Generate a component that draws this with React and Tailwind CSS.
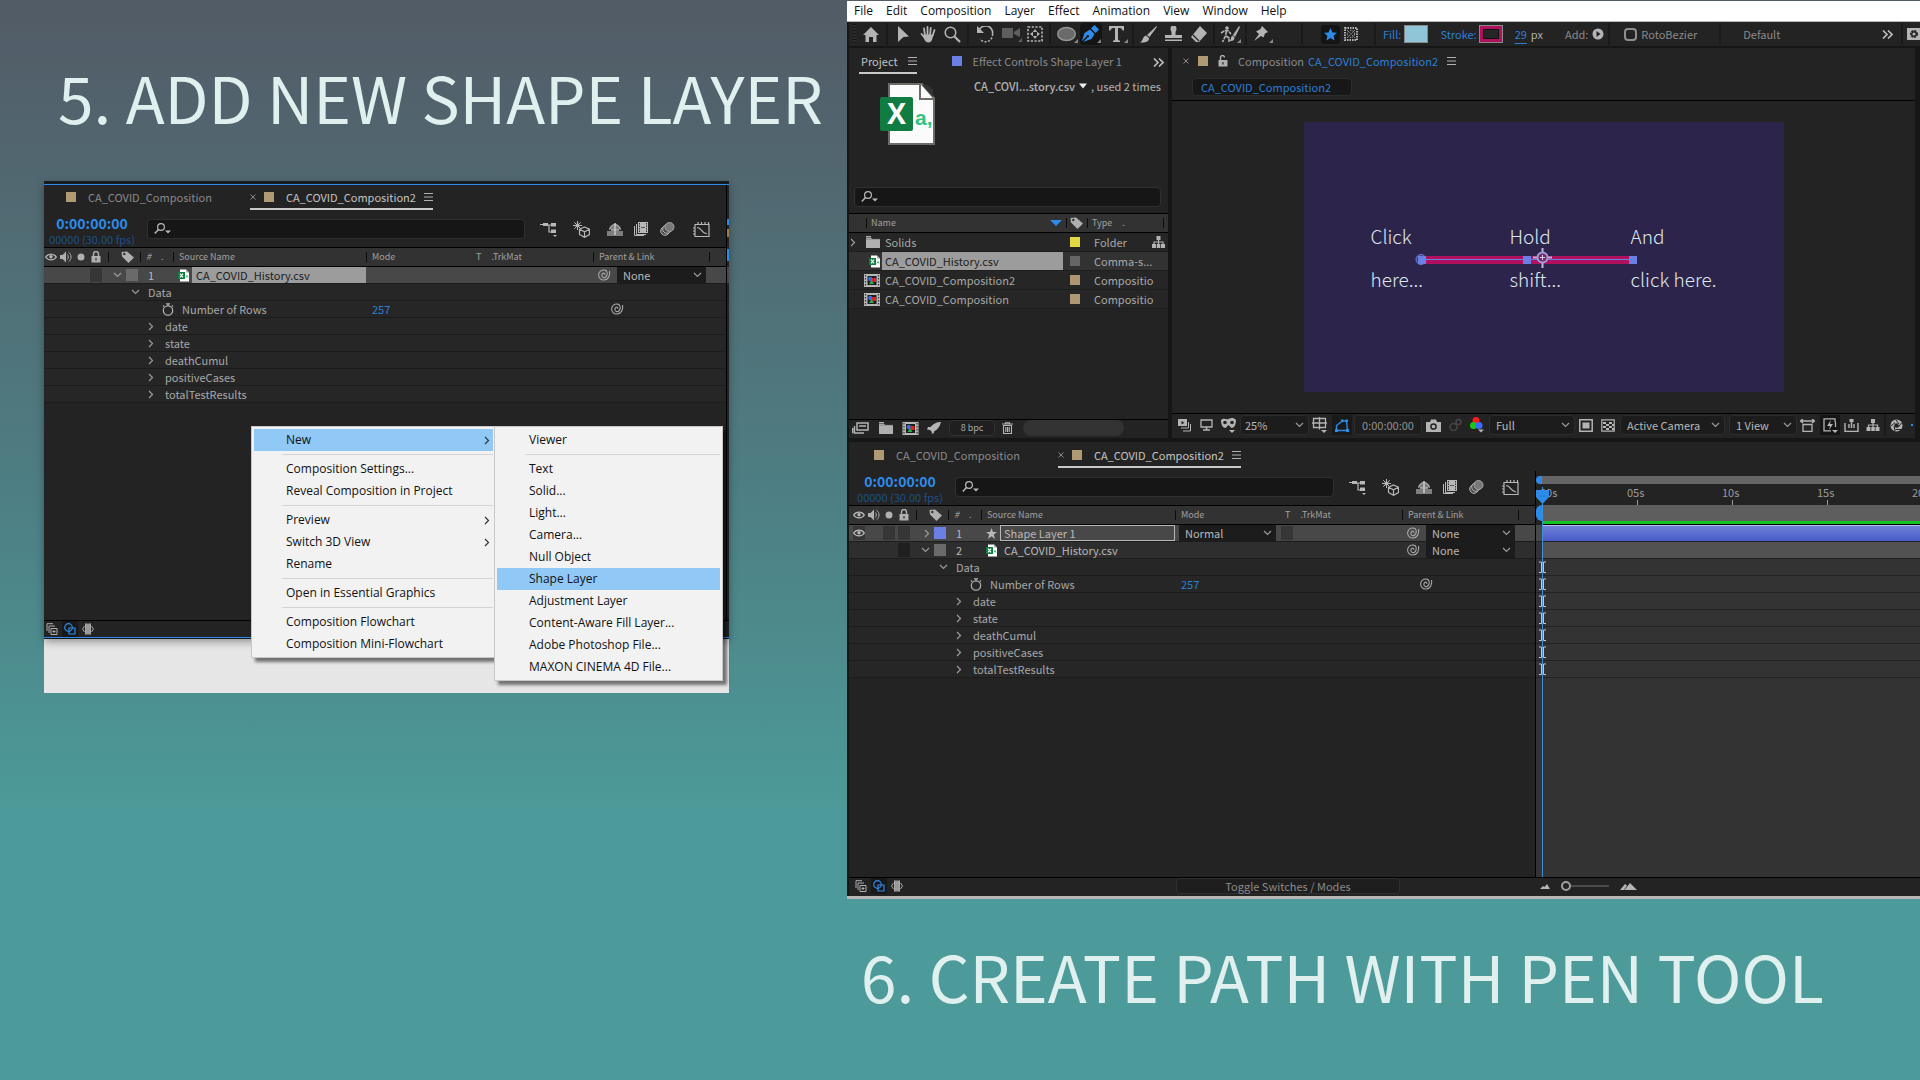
import React from "react";

const UI = "font-['Noto_Sans_CJK_SC','Noto_Sans',sans-serif]";
const MENU = "font-['Open_Sans','Noto_Sans',sans-serif]";
const HEAD = "font-['Noto_Sans_CJK_SC','Noto_Sans',sans-serif] whitespace-nowrap text-[#dff0ef]";

/* ---------- icons ---------- */
function Svg({ w = 16, h = w, box, className = "", children }) {
  return (
    <svg
      width={w}
      height={h}
      viewBox={box || `0 0 ${w} ${h}`}
      fill="none"
      stroke="none"
      aria-hidden="true"
      className={`shrink-0 ${className}`}
    >
      {children}
    </svg>
  );
}

const Burger = () => (
  <Svg w={9} h={8}>
    <path d="M0 .5h9M0 4h9M0 7.500h9" stroke="#b0b0b0" />
  </Svg>
);
const Close = () => (
  <Svg w={6}>
    <path d="M.5.5l5 5M5.500.5l-5 5" stroke="#8a8a8a" />
  </Svg>
);
const Down = ({ color = "#9a9a9a" }) => (
  <Svg w={9} h={6}>
    <path d="M1 1l3.500 3.500L8 1" stroke={color} strokeWidth="1.200" />
  </Svg>
);
const Right = ({ color = "#9a9a9a" }) => (
  <Svg w={6} h={9}>
    <path d="M1 1l3.500 3.500L1 8" stroke={color} strokeWidth="1.200" />
  </Svg>
);
const More = () => (
  <Svg w={11} h={9}>
    <path d="M1 .5l4 4-4 4M6 .5l4 4-4 4" stroke="#c0c0c0" strokeWidth="1.600" />
  </Svg>
);
const SearchGlyph = () => (
  <Svg w={17} h={12}>
    <circle cx="7" cy="4" r="3.400" stroke="#b8b8b8" strokeWidth="1.200" />
    <path d="M4.500 6.500L.8 10.500" stroke="#b8b8b8" strokeWidth="1.500" />
    <path d="M11 7.500h6l-3 3z" fill="#b8b8b8" />
  </Svg>
);
const Eye = () => (
  <Svg w={12} h={8}>
    <path d="M.7 4C3 .2 9 .2 11.300 4 9 7.800 3 7.800.7 4z" stroke="#b8b8b8" strokeWidth="1.300" />
    <circle cx="6" cy="3.800" r="1.700" fill="#b8b8b8" />
  </Svg>
);
const Speaker = () => (
  <Svg w={12} h={12}>
    <path d="M0 4h2.500L6 .5v11L2.500 8H0z" fill="#b0b0b0" />
    <path d="M7.500 3.500c1 1.500 1 3.500 0 5M8.500 1.200c3.400 2.500 3.400 7 0 9.600" stroke="#b0b0b0" />
  </Svg>
);
const Dot = () => (
  <Svg w={12} h={8}>
    <circle cx="6" cy="4" r="3.500" fill="#b0b0b0" />
  </Svg>
);
const Lock = ({ open }) => (
  <Svg w={12} h={12}>
    <path d={open ? "M3.500 5V2.500a2 2 0 0 1 4 0" : "M3.500 6V3a2.500 2.500 0 0 1 5 0v3"} stroke="#b0b0b0" strokeWidth="1.400" />
    <path d="M1.500 5h9v6.500h-9z" fill="#b0b0b0" />
    <path d="M6 7v2.500" stroke="#333" strokeWidth="1.300" />
  </Svg>
);
const Tag = () => (
  <Svg w={13} h={12}>
    <path d="M.5 1L1 5.500 7.500 12 13 6.500 6 .5z" fill="#b0b0b0" />
    <circle cx="3.300" cy="3" r="1.200" fill="#333" />
  </Svg>
);
const Swirl = () => (
  <Svg w={13} h={12}>
    <path
      d="M11.500 2c.8 5-1.500 9-5.500 9a5 5 0 1 1 .5-9.900C9 1.300 9.600 4 9 6s-2.200 3-3.800 2.500C3.500 8 3.400 5.200 5 4.300c1-.5 2 .2 1.700 1.500"
      stroke="#a8a8a8"
      strokeWidth="1.100"
    />
  </Svg>
);
const Stopwatch = () => (
  <Svg w={12} h={13}>
    <circle cx="6" cy="7.500" r="4.700" stroke="#b0b0b0" strokeWidth="1.200" />
    <path d="M4 .8h4M6 .8v2M10 2.500l1 1M2 2.500l-1 1" stroke="#b0b0b0" strokeWidth="1.300" />
  </Svg>
);
const CsvIcon = () => (
  <Svg w={11} h={13}>
    <path d="M2 .5h6l3 3v9H2z" fill="#fff" />
    <path d="M8 .5v3h3" fill="#aaa" />
    <path d="M0 3h7v7H0z" fill="#107c41" />
    <path d="M2 4.700l3 3.600M5 4.700L2 8.300" stroke="#fff" strokeWidth="1.100" />
    <path d="M8 8.500l1-2 1 2" stroke="#33c481" />
  </Svg>
);
const CompIcon = ({ w = 16 }) => (
  <Svg w={w} h={13} box="0 0 16 13">
    <path d="M0 0h16v13H0z" fill="#b8b8b8" />
    <path d="M1.500 1v12M14.500 1v12" stroke="#333" strokeWidth="1.200" strokeDasharray="1.500 1.500" />
    <path d="M3.500 2h9v9h-9z" fill="#1c1c1c" />
    <circle cx="6.300" cy="5" r="2.200" fill="#2f6fe0" />
    <path d="M8 4h4v4H8z" fill="#e02020" />
    <path d="M5 10l2.500-4L10 10z" fill="#2cae4e" />
  </Svg>
);
const FolderIcon = () => (
  <Svg w={14} h={12}>
    <path d="M0 1.500h5l1 1.500h8v9H0z" fill="#b0b0b0" />
    <path d="M0 .5h5M0 3.500h14" stroke="#b0b0b0" />
    <path d="M0 3.200h14" stroke="#777" strokeWidth=".6" />
  </Svg>
);
const Hierarchy = ({ w = 13 }) => (
  <Svg w={w} h={12} box="0 0 13 12">
    <path d="M4.500 0h4v4h-4zM0 8h4v4H0zM4.800 8h3.500v4H4.800zM9 8h4v4H9z" fill="#b4b4b4" />
    <path d="M6.500 4v4M2 8V6h9v2" stroke="#b4b4b4" strokeWidth="1.200" />
  </Svg>
);

const FlowIcon = () => (
  <Svg w={17} h={16}>
    <path d="M0 3.500h6M6 4h5M9 4v7h3" stroke="#b8b8b8" strokeWidth="1.200" />
    <path d="M3 2h5v3H3zM11 2h5v3.500h-5zM11 8.500h5V12h-5z" fill="#b8b8b8" />
    <path d="M13 14h4l-2 2z" fill="#b8b8b8" />
  </Svg>
);
const DraftCube = () => (
  <Svg w={17} h={17}>
    <path d="M4.500 0v9M0 4.500h9M1.300 1.300l6.400 6.400M7.700 1.300L1.300 7.700" stroke="#b8b8b8" />
    <circle cx="4.500" cy="4.500" r="2" fill="#b8b8b8" />
    <path d="M11.500 6l5 2.300v5.200l-5 2.800-5-2.800V8.300zM6.500 8.300l5 2.500 5-2.500M11.500 10.800v5.500" stroke="#b8b8b8" strokeWidth="1.200" />
  </Svg>
);
const ShyIcon = () => (
  <Svg w={16} h={13}>
    <path d="M0 8h16v5H0z" fill="#7e7e7e" />
    <path d="M2 6.500C3 3 5 1.500 8 1.500S13 3 14 6.500z" fill="#7e7e7e" />
    <path d="M2.500 6.500C3.500 3 5.500 1.500 8 1.500S12.500 3 13.500 6.500" stroke="#c4c4c4" />
    <path d="M8 0v12" stroke="#c4c4c4" strokeWidth="1.600" />
    <path d="M4 7h8" stroke="#c4c4c4" strokeWidth="1.400" />
  </Svg>
);
const BlendIcon = () => (
  <Svg w={14} h={14}>
    <path d="M4 0h10v11H4z" fill="#b8b8b8" />
    <path d="M5.500 1v10M12.500 1v10" stroke="#333" strokeDasharray="1.500 1" />
    <path d="M7 5.500h4" stroke="#555" />
    <path d="M2.500 2v10.500H12M.5 4v9.500H10" stroke="#b8b8b8" />
  </Svg>
);
const MotionBlur = () => (
  <Svg w={15} h={14}>
    <circle cx="5" cy="9" r="4.300" stroke="#b8b8b8" fill="#4a4a4a" />
    <circle cx="7" cy="7" r="4.300" stroke="#b8b8b8" fill="#4a4a4a" />
    <circle cx="9.500" cy="5" r="4.500" stroke="#a8a8a8" fill="#787878" />
  </Svg>
);
const GraphIcon = () => (
  <Svg w={17} h={15}>
    <path d="M2 2.500h14v12H2zM5 0v2.500M8.500 0v2.500M12 0v2.500M15.500 0v2.500M0 6h2M0 9h2M0 12h2" stroke="#b8b8b8" strokeWidth="1.200" />
    <path d="M4 5.500c5 0 4 6 10 6.500" stroke="#b8b8b8" strokeWidth="1.200" />
  </Svg>
);

/* ---------- small parts ---------- */
function IconButton({ label, className = "", children }) {
  return (
    <button type="button" aria-label={label} className={`flex shrink-0 items-center justify-center ${className}`}>
      {children}
    </button>
  );
}

function SelectBox({ label, value, className = "" }) {
  return (
    <span className={`flex items-center justify-between bg-[#1c1c1c] pr-1 ${className}`}>
      <select aria-label={label} defaultValue={value} className="min-w-0 flex-1 appearance-none bg-transparent text-[#b8b8b8] outline-none">
        <option>{value}</option>
      </select>
      <Down />
    </span>
  );
}

function SearchField({ label, className = "" }) {
  return (
    <label className={`flex h-5 min-w-0 items-center rounded-sm border border-[#303030] bg-[#161616] pl-1.5 ${className}`}>
      <SearchGlyph />
      <input type="text" aria-label={label} className="min-w-0 flex-1 bg-transparent text-[#b8b8b8] outline-none" />
    </label>
  );
}

const ColumnMark = () => <span className="h-2.5 w-px shrink-0 bg-[#0c0c0c]" />;

/* ---------- timeline panel ---------- */
function CompositionTabs({ inset }) {
  return (
    <div className={`flex items-end pb-[3px] text-[11px] leading-4 ${inset ? "h-[29px] pl-[25px]" : "h-7 pl-[22px]"}`}>
      <button type="button" className="flex h-6 items-center gap-3 border-b-2 border-transparent pr-[38px] text-[#8a8a8a]">
        <span className="size-2.5 bg-[#b09a74]" />
        CA_COVID_Composition
      </button>
      <button type="button" className="flex h-6 items-center border-b-2 border-[#c8c8c8] text-[#c4c4c4]">
        <Close />
        <span className="ml-2 mr-3 size-2.5 bg-[#b09a74]" />
        CA_COVID_Composition2
        <span className="ml-2">
          <Burger />
        </span>
      </button>
    </div>
  );
}

function TimeRow({ inset }) {
  return (
    <div className={`flex h-[34px] ${inset ? "pl-[3px]" : ""}`}>
      <div className="mr-[7px] w-24 shrink-0 text-center">
        <div className="text-[14px] font-bold leading-5 text-[#2d8ceb]">0:00:00:00</div>
        <div className="whitespace-nowrap text-[11px] leading-3 text-[#1d5086]">00000 (30.00 fps)</div>
      </div>
      <SearchField label="Search layers" className="mt-1.5 flex-1" />
      <div className="mt-1.5 flex h-5 w-[201px] shrink-0 items-center pl-[15px]">
        <IconButton label="Mini-Flowchart" className="mr-4"><FlowIcon /></IconButton>
        <IconButton label="Draft 3D" className="mr-[17px]"><DraftCube /></IconButton>
        <IconButton label="Hide shy layers" className="mr-[11px]"><ShyIcon /></IconButton>
        <IconButton label="Frame blending" className="mr-3"><BlendIcon /></IconButton>
        <IconButton label="Motion blur" className="mr-[18px]"><MotionBlur /></IconButton>
        <IconButton label="Graph editor"><GraphIcon /></IconButton>
      </div>
    </div>
  );
}

const cell = "h-[17px] border-b border-[#1c1c1c] p-0";
const head = "h-5 border-y border-black bg-[#323232] p-0 text-left font-normal";
const bit = "flex h-3.5 w-3 items-center justify-center";

function LayerRow({ layer }) {
  const on = layer.selected;
  const dark = on ? "bg-[#363636]" : "bg-[#1f1f1f]";
  return (
    <tr className={on ? "bg-[#484848]" : "bg-[#2e2e2e]"}>
      <td className={cell}>
        <div className="flex justify-end gap-[3px] pr-1.5">
          <span className={`${bit} ${layer.visible ? dark : ""}`}>{layer.visible && <Eye />}</span>
          <span className={bit} />
          <span className={`${bit} ${layer.visible ? dark : ""}`} />
          <span className={`${bit} ${dark}`} />
        </div>
      </td>
      <td className={cell}>
        <div className="flex items-center justify-end gap-1 pr-0.5">
          {layer.open ? <Down /> : <Right />}
          <span className={layer.shape ? "size-3 bg-[#6a80e4]" : "size-3 bg-[#6a6a6a]"} />
        </div>
      </td>
      <td className={`${cell} pl-2 text-[#b8b8b8]`}>{layer.number}</td>
      <td className={`${cell} pl-[5px]`}>
        <div className="flex h-4 items-center">
          {layer.shape ? (
            <Svg w={11} h={11}>
              <path d="M5.500 0L7 4h4L7.800 6.600 9 11 5.500 8.300 2 11l1.200-4.400L0 4h4z" fill="#b8b8b8" />
            </Svg>
          ) : (
            <CsvIcon />
          )}
          <span
            className={
              layer.shape
                ? "ml-[3px] h-4 flex-1 border border-[#b8b8b8] px-[3px] leading-[14px] text-[#b8b8b8]"
                : on
                  ? "ml-[3px] h-4 flex-1 bg-[#9c9c9c] px-1 text-[#1c1c1c]"
                  : "ml-[7px] flex-1 text-[#b8b8b8]"
            }
          >
            {layer.name}
          </span>
        </div>
      </td>
      <td className={`${cell} pl-1`}>{layer.mode && <SelectBox label="Mode" value={layer.mode} className="h-4 w-[97px] pl-1.5" />}</td>
      <td className={`${cell} pl-0.5`}>{layer.mode && <span className={`block h-3.5 w-3 ${dark}`} />}</td>
      <td className={cell}>
        <div className="flex items-center gap-1.5 pl-[5px]">
          <Swirl />
          <SelectBox label={`Parent of ${layer.name}`} value="None" className="h-4 w-[89px] pl-1.5" />
        </div>
      </td>
    </tr>
  );
}

const fields = ["date", "state", "deathCumul", "positiveCases", "totalTestResults"];

function LayerTable({ layers, inset }) {
  const row = "bg-[#262626] text-[#a8a8a8]";
  const lead = inset ? "pl-[3px]" : "";
  return (
    <table className="w-full table-fixed border-separate border-spacing-0 text-[11px] leading-4">
      <colgroup>
        <col className={inset ? "w-[67px]" : "w-16"} />
        <col className="w-8" />
        <col className="w-[33px]" />
        <col />
        <col className="w-[104px]" />
        <col className="w-[123px]" />
        <col className="w-[133px]" />
      </colgroup>
      <thead className="text-[9px] text-[#a0a0a0]">
        <tr>
          <th className={head} aria-label="Switches">
            <div className="flex items-center justify-end gap-[3px] pr-1.5"><Eye /><Speaker /><Dot /><Lock /></div>
          </th>
          <th className={head} aria-label="Label">
            <div className="flex items-center justify-between pr-1.5"><ColumnMark /><Tag /></div>
          </th>
          <th className={head}>
            <div className="flex items-center"><ColumnMark /><span className="ml-[5px] mr-2.5 italic">#</span>.</div>
          </th>
          <th className={head}>
            <div className="flex items-center gap-[5px]"><ColumnMark />Source Name</div>
          </th>
          <th className={head}>
            <div className="flex items-center gap-[5px]"><ColumnMark />Mode</div>
          </th>
          <th className={head}>
            <div className="flex items-center gap-2.5 pl-1.5"><span>T</span><span>.TrkMat</span></div>
          </th>
          <th className={head}>
            <div className="flex items-center gap-[5px] pr-4"><ColumnMark /><span className="flex-1">Parent &amp; Link</span><ColumnMark /></div>
          </th>
        </tr>
      </thead>
      <tbody>
        {layers.map((l) => (
          <LayerRow key={l.number} layer={l} />
        ))}
        <tr className={row}>
          <td colSpan={7} className={cell}>
            <div className={`flex ${lead}`}><div className="flex items-center gap-2 pl-[87px]"><Down />Data</div></div>
          </td>
        </tr>
        <tr className={row}>
          <td colSpan={4} className={cell}>
            <div className={`flex ${lead}`}><div className="flex h-4 items-center gap-2 pl-[118px]"><Stopwatch />Number of Rows</div></div>
          </td>
          <td colSpan={2} className={`${cell} pl-1.5 text-[#2d7fd6]`}>257</td>
          <td className={`${cell} pl-[18px]`}><Swirl /></td>
        </tr>
        {fields.map((f) => (
          <tr key={f} className={row}>
            <td colSpan={7} className={cell}>
              <div className={`flex ${lead}`}><div className="flex items-center gap-[11px] pl-[104px]"><Right />{f}</div></div>
            </td>
          </tr>
        ))}
      </tbody>
    </table>
  );
}

function PanelToggles() {
  return (
    <div className="flex items-center gap-1">
      <IconButton label="Layer switches">
        <Svg w={12} h={12}>
          <path d="M1 8V.7h6M3 10V3h6" stroke="#b0b0b0" />
          <path d="M5 5.500h6v6H5z" stroke="#b0b0b0" />
          <path d="M8 7v3M6.500 8.500h3" stroke="#b0b0b0" />
        </Svg>
      </IconButton>
      <IconButton label="Transfer controls" className="h-4 w-4 bg-[#181818]">
        <Svg w={12} h={12}>
          <circle cx="4.500" cy="4.500" r="3.800" stroke="#2d8ceb" strokeWidth="1.200" />
          <path d="M5 5h6v6H5z" stroke="#2d8ceb" strokeWidth="1.200" />
        </Svg>
      </IconButton>
      <IconButton label="In, out, duration and stretch">
        <Svg w={12} h={12}>
          <path d="M3.500.5h5v11h-5z" fill="#999" />
          <path d="M3.500.5v11M8.500.5v11M2.500 3L.5 6l2 3M9.500 3l2 3-2 3" stroke="#a8a8a8" />
        </Svg>
      </IconButton>
    </div>
  );
}

/* ---------- context menu ---------- */
const contextItems = [
  { text: "New", arrow: true, hot: true },
  null,
  { text: "Composition Settings..." },
  { text: "Reveal Composition in Project" },
  null,
  { text: "Preview", arrow: true },
  { text: "Switch 3D View", arrow: true },
  { text: "Rename" },
  null,
  { text: "Open in Essential Graphics" },
  null,
  { text: "Composition Flowchart" },
  { text: "Composition Mini-Flowchart" },
];
const newItems = [
  { text: "Viewer" },
  null,
  { text: "Text" },
  { text: "Solid..." },
  { text: "Light..." },
  { text: "Camera..." },
  { text: "Null Object" },
  { text: "Shape Layer", hot: true },
  { text: "Adjustment Layer" },
  { text: "Content-Aware Fill Layer..." },
  { text: "Adobe Photoshop File..." },
  { text: "MAXON CINEMA 4D File..." },
];

function Menu({ items, label, className }) {
  return (
    <div
      role="menu"
      aria-label={label}
      className={`${MENU} border border-[#c8c8c8] bg-[#f2f2f2] p-0.5 text-[12px] text-[#111] shadow-[4px_4px_3px_rgba(0,0,0,0.5)] ${className}`}
    >
      {items.map((item, i) =>
        item ? (
          <button
            key={item.text}
            type="button"
            role="menuitem"
            className={`flex h-[22px] w-full items-center justify-between whitespace-nowrap pl-8 pr-[3px] text-left ${item.hot ? "bg-[#90c8f6]" : ""}`}
          >
            {item.text}
            {item.arrow && <Right color="#333" />}
          </button>
        ) : (
          <div key={i} role="separator" className="ml-7 flex h-[7px] items-center">
            <span className="h-px w-full bg-[#d4d4d4]" />
          </div>
        )
      )}
    </div>
  );
}

function LayerMenuDemo() {
  return (
    <section className={`${UI} relative ml-11 mr-[118px] bg-[#e6e6e6] pb-[54px]`}>
      <div className="flex border-t-[3px] border-[#191c1f] bg-[#232323] shadow-[0_3px_8px_rgba(0,0,0,0.35)]">
        <div className="min-w-0 flex-1 border-t border-[#2d8ceb]">
          <div className="flex">
            <div className="min-w-0 flex-1">
              <CompositionTabs />
              <TimeRow />
              <LayerTable layers={[{ number: 1, name: "CA_COVID_History.csv", open: true, selected: true }]} />
              <div className="h-[217px]" />
            </div>
            <div className="flex w-[3px] flex-col border-l border-black pt-[34px]">
              <span className="h-1.5 bg-[#2d8ceb]" />
              <span className="mt-1 h-2 bg-[#a5774a]" />
              <span className="mt-3 h-3 bg-[#2d8ceb]" />
              <span className="mt-1.5 h-4 bg-[#484848]" />
            </div>
          </div>
          <div className="flex h-[17px] items-center border-t border-black pl-0.5">
            <PanelToggles />
          </div>
          <div className="h-0.5 border-b border-[#15181c] bg-[#2d8ceb]" />
        </div>
      </div>
      <Menu items={contextItems} label="Layer menu" className="absolute left-[207px] top-[245px] w-[245px]" />
      <Menu items={newItems} label="New" className="absolute left-[450px] top-[245px] w-[229px]" />
    </section>
  );
}

/* ---------- application window ---------- */
const Sep = ({ className = "" }) => <span className={`h-[22px] w-0.5 shrink-0 bg-[#1a1a1a] ${className}`} />;
const G = "#b4b4b4";

function Toolbar() {
  return (
    <div className="flex h-6 items-center overflow-hidden whitespace-nowrap bg-[#232323] text-[11px] text-[#8a8a8a]">
      <span className="ml-1 h-5 w-[3px] bg-[repeating-linear-gradient(#151515_0_1px,#2c2c2c_1px_3px)]" />
      <IconButton label="Home" className="ml-1.5 w-[18px]">
        <Svg w={16} h={15}><path d="M8 0l8 8h-2.500v7H10v-5H6v5H2.500V8H0z" fill={G} /></Svg>
      </IconButton>
      <Sep className="ml-1.5" />
      <IconButton label="Selection" className="ml-2 w-[14px]">
        <Svg w={12} h={17}><path d="M1 0l11 10.500-5.500.5L1 16z" fill={G} /></Svg>
      </IconButton>
      <IconButton label="Hand" className="ml-2.5 w-4">
        <Svg w={16} h={17}>
          <path d="M5 10L4 2.500M7.500 9V1M10 9l.8-7.200M12.500 10l2-6M5 12L1.500 8" stroke={G} strokeWidth="1.800" strokeLinecap="round" />
          <path d="M4 8.500h9c0 3.500-1 8-4.500 8C5 16.500 4.500 13 2.500 10z" fill={G} />
        </Svg>
      </IconButton>
      <IconButton label="Zoom" className="ml-2 w-[17px]">
        <Svg w={17} h={17}><circle cx="6.500" cy="6.500" r="5.300" stroke={G} strokeWidth="1.500" /><path d="M10.500 10.500l5.500 5.500" stroke={G} strokeWidth="2.200" /></Svg>
      </IconButton>
      <Sep className="ml-1.5" />
      <IconButton label="Rotate" className="ml-[7px] w-[18px]">
        <Svg w={18} h={17}><path d="M3 4.500A7 7 0 0 1 16.500 8" stroke={G} strokeWidth="1.600" /><path d="M16.500 8A7 7 0 0 1 4 13" stroke={G} strokeWidth="1.500" strokeDasharray="2 1.500" /><path d="M1 0v7h7z" fill={G} /></Svg>
      </IconButton>
      <IconButton label="Camera" className="ml-2 w-[20px]">
        <Svg w={20} h={16}><path d="M0 2h11v10H0zM12 6l6-4v9l-6-3z" fill="#5e5e5e" /><path d="M20 12v4h-4z" fill="#5e5e5e" /></Svg>
      </IconButton>
      <IconButton label="Pan behind" className="ml-1 w-[17px]">
        <Svg w={16} h={16}><path d="M1 1h14v14H1z" stroke={G} strokeWidth="1.600" strokeDasharray="2.200 1.500" /><path d="M8 3l2.200 3H5.800zM8 13l2.200-3H5.800zM3 8l3-2.200v4.400zM13 8l-3-2.200v4.400z" fill={G} /></Svg>
      </IconButton>
      <Sep className="ml-1.5" />
      <IconButton label="Ellipse" className="ml-[5px] w-[22px]">
        <Svg w={21} h={17}><ellipse cx="9.500" cy="8" rx="8.800" ry="6.500" fill="#6a6a6a" stroke="#969696" strokeWidth="1.400" /><path d="M21 13v4h-4z" fill="#888" /></Svg>
      </IconButton>
      <IconButton label="Pen" className="ml-0.5 h-[22px] w-[22px] rounded-sm bg-[#141414]">
        <Svg w={20} h={18}>
          <path d="M1 16L3.500 8 9 4.500l4.500 4.500L10.500 14 2 17l4.500-4.500a1.300 1.300 0 1 0-1-1z" fill="#2d8ceb" />
          <path d="M10 3.500L13.500 0 18 4.500 14.500 8z" fill="#2d8ceb" />
          <path d="M20 14v4h-4z" fill="#888" />
        </Svg>
      </IconButton>
      <IconButton label="Type" className="ml-[7px] w-[19px]">
        <Svg w={19} h={17}><path d="M0 0h15v4.500h-1.500C13 2.500 12 2 9 2v11c0 1.500.5 1.500 2 1.500V16H4v-1.500c1.500 0 2 0 2-1.500V2c-3 0-4 .5-4.500 2.500H0z" fill={G} /><path d="M19 13v4h-4z" fill="#888" /></Svg>
      </IconButton>
      <Sep className="ml-1" />
      <IconButton label="Brush" className="ml-1.5 w-[17px]">
        <Svg w={17} h={17}><path d="M16.500 0c.5.500.5 1 0 1.500L9.500 11 7 9z" fill={G} /><path d="M6 9.500L9 12c0 4-4 5-9 4.500 3-1.500 2.500-6 6-7z" fill={G} /></Svg>
      </IconButton>
      <IconButton label="Clone stamp" className="ml-2 w-[17px]">
        <Svg w={17} h={16}><path d="M6.500 7c0-2-1-2-1-4.500a3 3 0 0 1 6 0c0 2.500-1 2.500-1 4.500v2H17v3H0V9h6.500zM0 13.500h17V15H0z" fill={G} /></Svg>
      </IconButton>
      <IconButton label="Eraser" className="ml-2 w-[18px]">
        <Svg w={18} h={16}><path d="M10 0l7 7-8 9H6L1 11z" fill={G} /><path d="M3 9l6 6" stroke="#232323" strokeWidth="1.200" /></Svg>
      </IconButton>
      <Sep className="ml-[5px]" />
      <IconButton label="Roto brush" className="ml-1 w-[22px]">
        <Svg w={21} h={17}><circle cx="7" cy="2" r="1.800" fill={G} /><path d="M1 7l4-2.500h3L11 8M6.500 5l-1 5-3 6M6 10l3 2v4" stroke={G} strokeWidth="1.600" strokeDasharray="4 .7" /><path d="M19 0l-6 9 2 2 5-10zM12.500 9.500l2 2c0 3-2 3.500-5 3.500 2-1 1-4.500 3-5.500z" fill={G} /><path d="M21 13v4h-4z" fill="#888" /></Svg>
      </IconButton>
      <Sep className="ml-1" />
      <IconButton label="Puppet pin" className="ml-1.5 w-[20px]">
        <Svg w={20} h={17}><path d="M9 0l6 6-2 1-1 .5-1.500 4L8 10l-7 5 5-7-3-2.500L7.500 3z" fill={G} /><path d="M20 13v4h-4z" fill="#888" /></Svg>
      </IconButton>
      <Sep className="ml-7" />
      <IconButton label="Shape mode" className="ml-[18px] h-[19px] w-[19px] rounded-sm bg-[#141414]">
        <Svg w={13} h={13}><path d="M6.500 0l2 4.500 4.500.3-3.400 3 1 4.700-4.100-2.600L2.400 12.500l1-4.700L0 4.800l4.500-.3z" fill="#2d8ceb" /></Svg>
      </IconButton>
      <IconButton label="Mask mode" className="ml-[3px] w-[15px]">
        <Svg w={14} h={14}><path d="M1 1h12v12H1z" stroke={G} strokeWidth="2" strokeDasharray="1.500 1" /><circle cx="7" cy="7" r="3.500" stroke={G} strokeDasharray="1.500 1" /><path d="M3 3l8 8M11 3l-8 8" stroke={G} strokeDasharray="1 1.500" /></Svg>
      </IconButton>
      <Sep className="ml-4" />
      <button type="button" className="ml-[7px] text-[#2d7fd6]">Fill:</button>
      <button type="button" aria-label="Fill color" className="ml-[3px] h-[18px] w-6 shrink-0 border border-[#8a8a8a] bg-[#90c5d8]" />
      <button type="button" className="ml-3 text-[#2d7fd6]">Stroke:</button>
      <button type="button" aria-label="Stroke color" className="ml-0.5 flex h-[18px] w-6 shrink-0 items-center justify-center border border-[#8a8a8a] bg-[#b0115e]">
        <span className="h-2.5 w-4 border border-[#111] bg-[#262626]" />
      </button>
      <button type="button" className="ml-3 text-[#2d7fd6] underline underline-offset-4">29</button>
      <span className="ml-1 text-[#b0b0b0]">px</span>
      <button type="button" className="ml-[22px] flex items-center gap-1">
        Add:
        <Svg w={12}><circle cx="6" cy="6" r="5.500" fill={G} /><path d="M4.500 3l4 3-4 3z" fill="#232323" /></Svg>
      </button>
      <Sep className="ml-1" />
      <label className="ml-3.5 flex items-center gap-1">
        <input type="checkbox" className="size-[13px] appearance-none rounded-sm border-2 border-[#8f8f8f]" />
        RotoBezier
      </label>
      <Sep className="ml-[22px]" />
      <button type="button" className="ml-[22px]">Default</button>
      <IconButton label="More workspaces" className="ml-auto"><More /></IconButton>
      <Sep className="ml-2" />
      <IconButton label="Workspace settings" className="ml-1">
        <Svg w={13} h={14}><path d="M0 1h13v12H0z" fill={G} /><circle cx="7" cy="7" r="3" stroke="#232323" strokeWidth="2" strokeDasharray="2 .8" /><circle cx="7" cy="7" r="2.200" stroke="#232323" strokeWidth="1.200" /></Svg>
      </IconButton>
    </div>
  );
}

const projectItems = [
  { name: "Solids", type: "Folder", kind: "folder", swatch: "bg-[#e4d944]" },
  { name: "CA_COVID_History.csv", type: "Comma-s...", kind: "csv", swatch: "bg-[#666]", selected: true },
  { name: "CA_COVID_Composition2", type: "Compositio", kind: "comp", swatch: "bg-[#ae9874]" },
  { name: "CA_COVID_Composition", type: "Compositio", kind: "comp", swatch: "bg-[#ae9874]" },
];

function ProjectPanel() {
  return (
    <section className="flex w-[319px] shrink-0 flex-col bg-[#232323] text-[11px] leading-4">
      <div className="flex h-[26px] items-end overflow-hidden whitespace-nowrap">
        <button type="button" className="ml-2.5 flex h-6 items-center gap-2.5 border-b-2 border-[#c8c8c8] pl-0.5 text-[#c4c4c4]">
          Project <Burger />
        </button>
        <button type="button" className="ml-[35px] flex h-6 items-center gap-[11px] border-b-2 border-transparent text-[#8a8a8a]">
          <span className="size-2.5 bg-[#6a80e4]" />
          Effect Controls Shape Layer 1
        </button>
        <IconButton label="More panels" className="ml-auto mr-1 h-6"><More /></IconButton>
      </div>
      <div className="flex h-[113px] items-start pl-[31px]">
        <Svg w={56} h={62} className="mt-[9px]">
          <path d="M9 1h33l12 14v46H9z" fill="#fbfbfb" stroke="#6e6a66" strokeWidth="2" />
          <path d="M40 1v15h14" stroke="#6e6a66" strokeWidth="2" />
          <path d="M42 2l11 12V6l-6-4z" fill="#333" />
          <rect x="0" y="14" width="33" height="34" rx="2" fill="#107c41" />
          <text x="16.500" y="41" textAnchor="middle" fontSize="28" fontWeight="700" fontFamily="Open Sans" fill="#fff">X</text>
          <text x="35" y="42" fontSize="21" fontWeight="700" fontFamily="Liberation Sans" fill="#33c481">a,</text>
        </Svg>
        <div className="ml-[38px] mt-1 flex items-center whitespace-nowrap text-[#b4b4b4]">
          <b className="font-medium">CA_COVI...story.csv</b>
          <Svg w={8} h={6} className="mx-1"><path d="M0 .5h8L4 5.500z" fill="#eee" /></Svg>
          , used 2 times
        </div>
      </div>
      <SearchField label="Search project" className="ml-[5px] mr-[7px]" />
      <div className="mt-1.5 flex-1">
        <table className="w-full table-fixed border-separate border-spacing-0">
          <colgroup>
            <col />
            <col className="w-[21px]" />
            <col className="w-[81px]" />
          </colgroup>
          <thead className="text-[9px] text-[#a0a0a0]">
            <tr>
              <th className={head}>
                <div className="flex items-center gap-1 pl-[17px] pr-1"><ColumnMark /><span className="flex-1">Name</span><Svg w={12} h={6}><path d="M0 0h12L6 6z" fill="#2d8ceb" /></Svg></div>
              </th>
              <th className={head} aria-label="Label"><div className="flex items-center gap-[3px]"><ColumnMark /><Tag /></div></th>
              <th className={head}>
                <div className="flex items-center gap-1 pr-1"><ColumnMark /><span>Type</span><span className="ml-1.5 flex-1">.</span><ColumnMark /></div>
              </th>
            </tr>
          </thead>
          <tbody className="text-[#a8a8a8]">
            {projectItems.map((it) => {
              const c = `h-[19px] border-b border-[#1e1e1e] p-0 ${it.selected ? "bg-[#323232]" : "bg-[#262626]"}`;
              return (
                <tr key={it.name}>
                  <td className={c}>
                    <div className="flex h-[18px] items-center">
                      <span className="flex w-[33px] items-center justify-end gap-2.5 pr-0.5">
                        {it.kind === "folder" && <Right />}
                        {it.kind === "folder" ? <FolderIcon /> : it.kind === "csv" ? <CsvIcon /> : <CompIcon />}
                      </span>
                      <span className={`h-[18px] flex-1 pl-[3px] leading-[18px] ${it.selected ? "mr-[3px] bg-[#9c9c9c] text-[#1c1c1c]" : ""}`}>{it.name}</span>
                    </div>
                  </td>
                  <td className={c}><span className={`ml-1 block size-2.5 ${it.swatch}`} /></td>
                  <td className={c}>
                    <div className="flex items-center gap-0.5 pl-[7px]">
                      <span className="w-14 whitespace-nowrap">{it.type}</span>
                      {it.kind === "folder" && <Hierarchy />}
                    </div>
                  </td>
                </tr>
              );
            })}
          </tbody>
        </table>
      </div>
      <div className="flex h-[19px] items-center border-t border-black pb-0.5 pl-[3px] text-[9px]">
        <IconButton label="Interpret footage">
          <Svg w={17} h={12}><path d="M5 1h11v7H5z" stroke={G} strokeWidth="1.500" /><path d="M7 4h7M2.500 4v7H12M.7 6v5.300" stroke={G} strokeWidth="1.400" /></Svg>
        </IconButton>
        <IconButton label="New folder" className="ml-2.5"><FolderIcon /></IconButton>
        <IconButton label="New composition" className="ml-[9px]"><CompIcon w={17} /></IconButton>
        <IconButton label="Adjust interpretation" className="ml-2"><Svg w={14} h={12}><path d="M14 0C9 0 6 2 3.500 5H1L0 7.500l3 .5 2 2-.5 2L7 11V9.500C11 7.500 13 4 14 0z" fill={G} /></Svg></IconButton>
        <button type="button" className="ml-2 h-4 w-[46px] rounded-sm border border-[#303030] bg-[#1f1f1f] leading-[14px] text-[#a8a8a8]">8 bpc</button>
        <IconButton label="Delete" className="ml-[7px]"><Svg w={11} h={12}><path d="M0 2h11M3.500 2V.7h4V2M1.500 3.500h8v8h-8zM3.800 5v5M5.500 5v5M7.200 5v5" stroke={G} strokeWidth="1.100" /></Svg></IconButton>
        <span className="ml-2.5 h-4 w-[101px] rounded-full bg-[#333]" />
      </div>
    </section>
  );
}

function Canvas() {
  const note = "absolute top-[92px] whitespace-pre font-['Noto_Sans_CJK_SC',sans-serif] text-[19px] font-light leading-[43px] text-[#dfe8ee]";
  return (
    <div className="relative h-[270px] w-[480px] bg-[#2c244b]">
      <p className={`${note} left-[67px]`}>{"Click\nhere..."}</p>
      <p className={`${note} left-[206px]`}>{"Hold\nshift..."}</p>
      <p className={`${note} left-[327px]`}>{"And\nclick here."}</p>
      <Svg w={226} h={20} className="absolute left-[110px] top-[126px]">
        <path d="M6 12h212" stroke="#b0115e" strokeWidth="8" />
        <path d="M6 11.500h212" stroke="#6a80e4" />
        <circle cx="7" cy="11.500" r="5" stroke="#6a80e4" fill="#3b3f80" />
        <path d="M4 8h8v8H4zM109 8h8v8h-8zM215 8h8v8h-8z" fill="#6a80e4" />
        <path d="M128.500 0v4M128.500 15v5M119 9.500h5M133 9.500h5" stroke="#b9b4dc" strokeWidth="2" />
        <circle cx="128.500" cy="9.500" r="5" stroke="#9d9bdc" strokeWidth="2" fill="#7a2a62" />
        <path d="M128.500 7v5M126 9.500h5" stroke="#dccbe6" />
      </Svg>
    </div>
  );
}

function CompositionPanel() {
  const box = "h-5 rounded-sm border border-[#2c2c2c]";
  return (
    <section className="flex min-w-0 flex-1 flex-col bg-[#232323] text-[11px] leading-4 text-[#b8b8b8]">
      <div className="flex h-[25px] items-center gap-[9px] whitespace-nowrap pl-[11px]">
        <Close />
        <span className="size-2.5 bg-[#b09a74]" />
        <Lock open />
        <button type="button" className="flex items-center gap-1 text-[#8a8a8a]">
          Composition <span className="text-[#2d7fd6]">CA_COVID_Composition2</span>
        </button>
        <Burger />
      </div>
      <div className="flex h-7 items-center border-b border-black pl-5">
        <button type="button" className="h-[18px] w-40 rounded-sm border border-[#2c2c2c] bg-[#171717] pl-2 text-left text-[#2d7fd6]">CA_COVID_Composition2</button>
      </div>
      <div className="flex flex-1 items-center justify-center"><Canvas /></div>
      <div className="flex h-[25px] items-center overflow-hidden whitespace-nowrap border-t border-black pb-0.5 pl-1.5">
        <IconButton label="Always preview"><Svg w={13} h={13}><path d="M0 0h9v7H0z" fill={G} /><path d="M3.500 2v3.500l3-1.700z" fill="#232323" /><path d="M10.500 3v6H3M12.500 5v7H5" stroke={G} /></Svg></IconButton>
        <IconButton label="Primary viewer" className="ml-[9px]"><Svg w={13} h={12}><path d="M1 1h11v7H1z" stroke={G} strokeWidth="1.300" /><path d="M3 11h7M6.500 8v3" stroke={G} strokeWidth="1.600" /></Svg></IconButton>
        <IconButton label="Mask view" className="ml-2"><Svg w={15} h={15}><path d="M0 2c3-3 5 0 7.500-1C10 0 12-1 15 2c0 5-2 8-4.500 8L7.500 7l-3 3C2 10 0 7 0 2z" fill={G} /><circle cx="4" cy="4.500" r="1.800" fill="#232323" /><circle cx="11" cy="4.500" r="1.800" fill="#232323" /><path d="M8 12h6l-3 3z" fill={G} /></Svg></IconButton>
        <SelectBox label="Magnification" value="25%" className={`${box} ml-1 w-[69px] pl-1`} />
        <IconButton label="Grid and guides" className="ml-[3px]"><Svg w={15} h={16}><path d="M1.500 1.500h12v9h-12zM7.500 0v12.500M0 6h15" stroke={G} strokeWidth="1.300" /><path d="M9 13h6l-3 3z" fill={G} /></Svg></IconButton>
        <IconButton label="Show mask paths" className="ml-[5px] h-5 w-5 bg-[#191919]"><Svg w={14} h={13}><path d="M1.500 11.500v-5l6-4.500h4l1 9.500z" stroke="#2d8ceb" strokeWidth="1.400" /><path d="M0 10h3v3H0zM11 10h3v3h-3zM6 .5h2.500v2.500H6zM10.500.5H13V3h-2.500z" fill="#2d8ceb" /></Svg></IconButton>
        <button type="button" className={`${box} ml-0.5 w-[68px] bg-[#1e1e1e] text-[#909090]`}>0:00:00:00</button>
        <IconButton label="Snapshot" className="ml-1"><Svg w={15} h={13}><path d="M0 3h4l1-2.500h5L11 3h4v10H0z" fill={G} /><circle cx="7.500" cy="7.500" r="2.600" stroke="#232323" strokeWidth="1.500" /></Svg></IconButton>
        <IconButton label="Show snapshot" className="ml-2"><Svg w={13} h={14}><circle cx="4.500" cy="9" r="3.500" stroke="#454545" strokeWidth="1.600" /><circle cx="9.500" cy="4" r="2.500" stroke="#454545" strokeWidth="1.600" /></Svg></IconButton>
        <IconButton label="Channels" className="ml-2"><Svg w={14} h={16}><circle cx="6" cy="3.500" r="3.500" fill="#ff1a1a" /><circle cx="3.500" cy="8.500" r="3.500" fill="#17c817" /><circle cx="9" cy="8.500" r="3.500" fill="#3b6bff" /><path d="M8 12.500h6l-3 3z" fill={G} /></Svg></IconButton>
        <SelectBox label="Resolution" value="Full" className={`${box} ml-[5px] w-[86px] pl-1.5`} />
        <IconButton label="Region of interest" className="ml-1"><Svg w={14} h={13}><path d="M.8.800h12.400v11.400H.8z" stroke={G} strokeWidth="1.500" /><path d="M3.500 3.500h7v6h-7z" fill={G} /></Svg></IconButton>
        <IconButton label="Transparency grid" className="ml-2"><Svg w={14} h={13}><path d="M.8.800h12.400v11.400H.8z" stroke={G} strokeWidth="1.200" /><path d="M2 3h3v2H2zM8 3h3v2H8zM5 5h3v2H5zM11 5h2v2h-2zM2 7h3v2H2zM8 7h3v2H8zM5 9h3v2H5zM11 9h2v2h-2z" fill={G} /></Svg></IconButton>
        <SelectBox label="Camera" value="Active Camera" className={`${box} ml-[5px] w-[105px] pl-1.5`} />
        <SelectBox label="View layout" value="1 View" className={`${box} ml-1 w-[68px] pl-1.5`} />
        <IconButton label="Pixel aspect ratio" className="ml-[3px]"><Svg w={15} h={13}><path d="M0 2h15M3 5.500h9v7H3zM3 0L.5 2 3 4M12 0l2.500 2L12 4" stroke={G} strokeWidth="1.300" /></Svg></IconButton>
        <IconButton label="Fast previews" className="ml-[5px] h-5 w-5 bg-[#151515]"><Svg w={15} h={15}><path d="M12 4V.8H1v12h7M12.500 4v5" stroke={G} strokeWidth="1.300" /><path d="M8 2L4 8h3l-1 4 4-6H7z" fill={G} /><path d="M9 12h6l-3 3z" fill={G} /></Svg></IconButton>
        <IconButton label="Timeline" className="ml-1"><Svg w={15} h={13}><path d="M1 4v8.500h13V4M5 5v4M10 5v4M7.500 1v8" stroke={G} strokeWidth="1.400" /><path d="M5.500 0h4v3h-4z" fill={G} /></Svg></IconButton>
        <IconButton label="Flowchart" className="ml-[7px]"><Hierarchy w={14} /></IconButton>
        <Sep className="ml-1" />
        <IconButton label="Reset exposure" className="ml-1"><Svg w={13} h={13}><circle cx="6.500" cy="6.500" r="6" fill={G} /><circle cx="6.500" cy="6.500" r="2.200" fill="#232323" /><path d="M6 1l3 4M11.500 4L8 8.500M11 10.500H5.500M5 12L4 7M1 7l4-3.500" stroke="#232323" /></Svg></IconButton>
        <span className="ml-2 size-0.5 bg-[#2d8ceb]" />
      </div>
    </section>
  );
}

const marks = ["05s", "10s", "15s", "20s"];
const Beam = () => (
  <Svg w={7} h={13}>
    <path d="M0 1h2.500v10.500H0M7 1H4.500v10.500H7" stroke="#c8c8c8" />
  </Svg>
);

function Tracks() {
  return (
    <div className="relative flex min-w-0 flex-1 flex-col overflow-hidden border-l border-black pt-[5px]">
      <div className="flex h-2">
        <span className="w-1.5 rounded-l-full bg-[#2d8ceb]" />
        <span className="flex-1 bg-[#666]" />
      </div>
      <div className="mt-0.5 flex h-[19px] overflow-hidden text-[11px] leading-3 text-[#9a9a9a]">
        <span className="w-[91px] shrink-0 pl-1">00s</span>
        {marks.map((m) => (
          <div key={m} className="flex w-[95px] shrink-0 flex-col justify-between">
            <span>{m}</span>
            <span className="ml-2.5 h-[5px] w-px bg-[#9a9a9a]" />
          </div>
        ))}
      </div>
      <div className="flex h-4">
        <span className="w-1.5 rounded-l-full bg-[#2d8ceb]" />
        <span className="flex-1 bg-[#5e5e5e]" />
      </div>
      <div className="ml-1.5 h-1 border-b border-black bg-[#14c322]" />
      <div className="flex h-[17px] border-b border-[#222]">
        <span className="w-1.5 bg-[#484848]" />
        <span className="flex-1 border-t border-[#b4bcec] bg-linear-to-b from-[#7080d4] to-[#485cc8]" />
      </div>
      <div className="flex h-[17px] border-b border-[#222]">
        <span className="w-1.5 bg-[#333]" />
        <span className="flex-1 bg-[#525252]" />
      </div>
      {["Data", "Rows", ...fields].map((f) => (
        <div key={f} className="flex h-[17px] items-center border-b border-[#232323] bg-[#333] pl-[3px]">
          <Beam />
        </div>
      ))}
      <div className="flex-1 bg-[#333]" />
      <span className="absolute bottom-0 left-1.5 top-4 w-px bg-[#3f8fd8]" />
      <Svg w={13} h={16} className="absolute left-0 top-[18px]">
        <path d="M0 1h13v7l-6.500 7L0 8z" fill="#2d8ceb" />
        <path d="M4.500 7h1M7.500 7h1" stroke="#0e4f90" />
      </Svg>
    </div>
  );
}

function TimelinePanel() {
  return (
    <section className="mt-1 bg-[#232323]">
      <CompositionTabs inset />
      <div className="flex">
        <div className="w-[686px] shrink-0">
          <TimeRow inset />
          <LayerTable
            inset
            layers={[
              { number: 1, name: "Shape Layer 1", shape: true, selected: true, visible: true, mode: "Normal" },
              { number: 2, name: "CA_COVID_History.csv", open: true },
            ]}
          />
          <div className="h-[199px]" />
        </div>
        <Tracks />
      </div>
      <div className="flex h-[19px] items-center border-t border-black pb-0.5 pl-1.5">
        <PanelToggles />
        <button type="button" className="ml-[273px] h-4 w-56 rounded-sm border border-[#303030] bg-[#1e1e1e] text-[11px] leading-[14px] text-[#8a8a8a]">
          Toggle Switches / Modes
        </button>
        <Svg w={10} h={5} className="ml-[140px]"><path d="M0 5l3-3 1.500 1L7 0l3 5z" fill={G} /></Svg>
        <input
          type="range"
          aria-label="Timeline zoom"
          min="0"
          max="100"
          defaultValue="0"
          className="ml-[11px] h-3 w-12 appearance-none bg-transparent [&::-webkit-slider-runnable-track]:h-0.5 [&::-webkit-slider-runnable-track]:bg-[#4a4a4a] [&::-webkit-slider-thumb]:-mt-1 [&::-webkit-slider-thumb]:size-2.5 [&::-webkit-slider-thumb]:appearance-none [&::-webkit-slider-thumb]:rounded-full [&::-webkit-slider-thumb]:border-2 [&::-webkit-slider-thumb]:border-[#a0a0a0] [&::-webkit-slider-thumb]:bg-[#232323]"
        />
        <Svg w={17} h={7} className="ml-[11px]"><path d="M0 7l5-6 2 1.500-3 4.500zM4.500 7L10 0l7 7z" fill={G} /></Svg>
      </div>
    </section>
  );
}

const menus = ["File", "Edit", "Composition", "Layer", "Effect", "Animation", "View", "Window", "Help"];

function AppWindow() {
  return (
    <section className={`${UI} border-b-[3px] border-[#b9b5b5]`}>
      <nav className={`${MENU} flex h-[21px] items-center gap-[13px] border-b border-[#b8b8b8] bg-white pl-[7px] text-[12px] text-[#111]`}>
        {menus.map((m) => (
          <button key={m} type="button">{m}</button>
        ))}
      </nav>
      <div className="bg-[#161616] pl-0.5">
        <Toolbar />
        <div className="mt-0.5 flex h-[390px] gap-1 pr-[5px]">
          <ProjectPanel />
          <CompositionPanel />
        </div>
        <TimelinePanel />
      </div>
    </section>
  );
}

export default function App() {
  return (
    <main className="grid min-h-screen grid-cols-[847fr_1073fr] overflow-hidden bg-linear-to-b from-[#525b66] via-[#4d7e83] via-45% to-[#4c9a99] to-75%">
      <div className="min-w-0">
        <h1 className={`${HEAD} flex h-[181px] items-center pl-[58px] pt-2.5 text-[64px]`}>5. ADD NEW SHAPE LAYER</h1>
        <LayerMenuDemo />
      </div>
      <div className="min-w-0 pt-px">
        <AppWindow />
        <h2 className={`${HEAD} flex h-[152px] items-center pl-[14px] text-[64px]`}>6. CREATE PATH WITH PEN TOOL</h2>
      </div>
    </main>
  );
}
